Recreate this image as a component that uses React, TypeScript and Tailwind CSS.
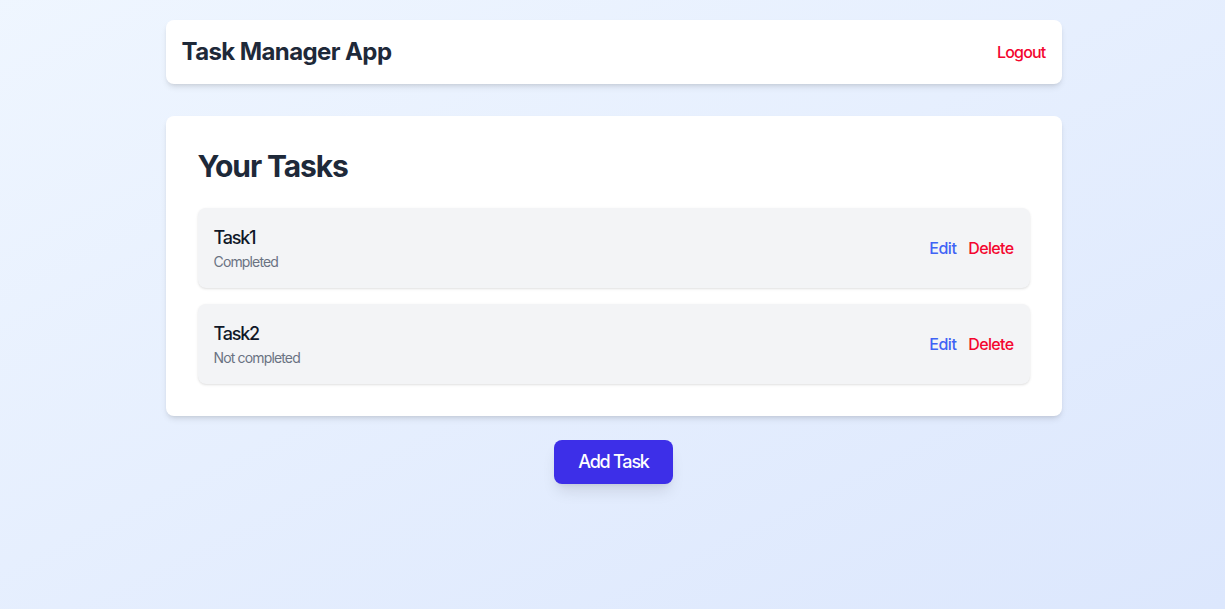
const tasks = [
  { id: 1, title: "Task1", completed: true },
  { id: 2, title: "Task2", completed: false },
];

export default function App() {
  return (
    <div
      className="min-h-screen bg-gradient-to-br from-blue-50 to-[#dce7fd] pt-5 pl-[2px]"
      style={{ fontFamily: "Inter, 'Noto Sans', sans-serif" }}
    >
      <div className="mx-auto max-w-4xl">
        <header className="flex items-center justify-between rounded-lg bg-white p-4 shadow-md">
          <h1 className="text-2xl font-bold tracking-[-0.6px] text-gray-800">Task Manager App</h1>
          <button className="font-medium tracking-[-0.8px] text-[#f3062f]">Logout</button>
        </header>

        <main className="mt-8 rounded-lg bg-white p-8 shadow-md">
          <h2 className="mb-6 text-3xl font-bold tracking-[-1.1px] text-gray-800">Your Tasks</h2>
          <ul className="flex flex-col gap-4">
            {tasks.map((task) => (
              <li key={task.id} className="flex items-center justify-between rounded-lg bg-gray-100 p-4 shadow-sm">
                <div>
                  <p className="text-lg font-medium tracking-[-1.2px] text-gray-900">{task.title}</p>
                  <p className="text-sm tracking-[-0.85px] text-gray-500">
                    {task.completed ? "Completed" : "Not completed"}
                  </p>
                </div>
                <div className="flex gap-3">
                  <button className="font-medium tracking-[-0.5px] text-[#3f63f5]">Edit</button>
                  <button className="font-medium tracking-[-0.65px] text-[#f3062f]">Delete</button>
                </div>
              </li>
            ))}
          </ul>
        </main>

        <div className="mt-6 flex justify-center">
          <button className="rounded-lg bg-[#3d2fe8] px-6 py-2 text-lg font-medium tracking-[-1.2px] text-white shadow-lg">
            Add Task
          </button>
        </div>
      </div>
    </div>
  );
}
